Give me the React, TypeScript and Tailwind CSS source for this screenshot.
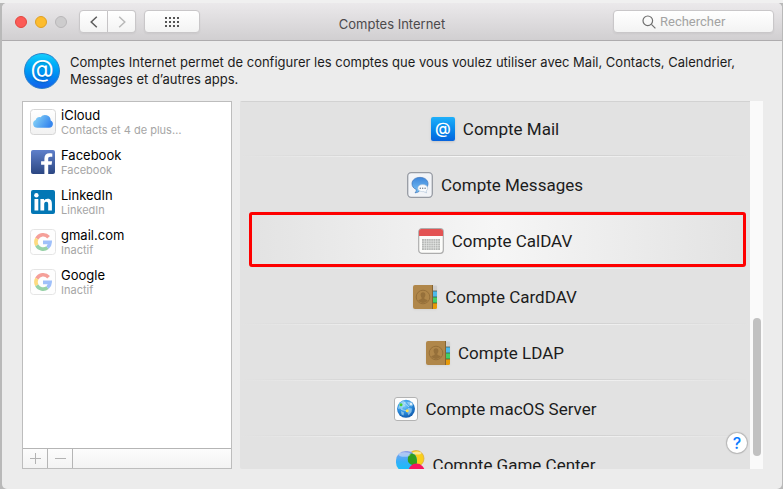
import type { ReactNode } from 'react';

function AtGlyph({ size }: { size: 'lg' | 'sm' }) {
  return size === 'lg' ? (
    <span
      aria-hidden="true"
      className="flex size-9 shrink-0 items-center justify-center rounded-full border border-[#2a7fc9] bg-linear-to-b from-[#14cdfc] to-[#1560ea] pb-1 text-2xl leading-none text-white text-shadow-sm"
    >
      @
    </span>
  ) : (
    <span
      aria-hidden="true"
      className="flex size-6 shrink-0 items-center justify-center rounded-xs bg-linear-to-b from-[#1fb0fa] to-[#0763dd] pb-0.5 font-['Inter','Liberation_Sans',sans-serif] text-base leading-none font-medium text-white shadow-sm"
    >
      @
    </span>
  );
}

function CloudIcon() {
  return (
    <svg viewBox="0 0 26 26" className="size-[26px]" aria-hidden="true">
      <defs>
        <linearGradient id="cloud" x1="0" y1="0" x2="1" y2="0.4">
          <stop offset="0" stopColor="#8fdcf8" />
          <stop offset="1" stopColor="#3787ee" />
        </linearGradient>
        <linearGradient id="tile" x1="0" y1="0" x2="0" y2="1">
          <stop offset="0" stopColor="#ffffff" />
          <stop offset="1" stopColor="#f1f1f1" />
        </linearGradient>
      </defs>
      <rect x="0.5" y="0.5" width="25" height="25" rx="3" fill="url(#tile)" stroke="#d6d6d6" />
      <path
        d="M7.2 18.8a4.100 4.100 0 0 1-1.500-7.900 3.600 3.600 0 0 1 4.900-2.700 5.700 5.700 0 0 1 10.100 3.200 3.900 3.900 0 0 1-1.500 7.400z"
        fill="url(#cloud)"
      />
    </svg>
  );
}

function FacebookIcon() {
  return (
    <svg viewBox="0 0 26 26" className="size-[26px]" aria-hidden="true">
      <defs>
        <linearGradient id="fb" x1="0" y1="0" x2="0" y2="1">
          <stop offset="0" stopColor="#5f80cb" />
          <stop offset="1" stopColor="#2b4682" />
        </linearGradient>
      </defs>
      <rect x="1" y="1" width="24" height="24" rx="2" fill="url(#fb)" />
      <path
        d="M14.400 25v-9.200h-3.300v-3.600h3.300V9.400c0-3.300 2-5.100 5-5.100 1.400 0 2.200.1 2.900.2v3.300h-2c-1.700 0-2.100.8-2.100 2v2.400h3.900l-.5 3.600h-3.400V25z"
        fill="#fff"
      />
    </svg>
  );
}

function LinkedInIcon() {
  return (
    <svg viewBox="0 0 26 26" className="size-[26px]" aria-hidden="true">
      <rect x="1" y="1" width="24" height="24" rx="2" fill="#0377b5" />
      <circle cx="6.400" cy="6.300" r="2.200" fill="#fff" />
      <path
        d="M4.500 10h3.800v11.500H4.500zM10.400 10H14v1.600c.6-1.100 1.900-1.900 3.600-1.900 3.600 0 4.300 2.400 4.300 5.500v6.300h-3.700v-5.700c0-1.400 0-3-1.900-3s-2.100 1.400-2.100 2.900v5.800h-3.800z"
        fill="#fff"
      />
    </svg>
  );
}

function GoogleIcon() {
  return (
    <svg viewBox="0 0 26 26" className="size-[26px]" aria-hidden="true">
      <rect x="0.5" y="0.5" width="25" height="25" rx="3" fill="#fefefe" stroke="#e5e5e5" />
      <g fill="none" strokeWidth="3.600">
        <path d="M18.600 8.200A7.200 7.200 0 0 0 6.800 9.600" stroke="#f5a099" />
        <path d="M6.800 9.600a7.200 7.200 0 0 0 0 6.800" stroke="#fddb80" />
        <path d="M6.800 16.400a7.200 7.200 0 0 0 10.700 2.200" stroke="#98d2a8" />
        <path d="M17.500 18.600a7.200 7.200 0 0 0 2.600-5.200H13" stroke="#9fc0fa" />
      </g>
    </svg>
  );
}

function MessagesIcon() {
  return (
    <svg viewBox="0 0 26 26" className="size-[26px]" aria-hidden="true">
      <defs>
        <linearGradient id="bubble" x1="0" y1="0" x2="0" y2="1">
          <stop offset="0" stopColor="#3d86db" />
          <stop offset="1" stopColor="#7cc4f6" />
        </linearGradient>
      </defs>
      <rect x="0.7" y="0.7" width="24.600" height="24.600" rx="3.500" fill="#f2f4f8" stroke="#979ba3" strokeWidth="1.300" />
      <path
        d="M13 5.400c4.700 0 8 2.600 8 6.300s-3.300 6.500-8 6.500c-.7 1.400-2.500 2.400-5 2.600 1-.9 1.400-2 1.300-3.300-2.700-1.100-4.300-3.200-4.300-5.800 0-3.700 3.300-6.300 8-6.300z"
        fill="url(#bubble)"
        stroke="#3770b8"
        strokeWidth="0.700"
      />
      <path
        d="M15.700 12.600c2.900 0 4.900 1.500 4.900 3.600 0 1.200-.6 2.200-1.600 2.800 0 .8.300 1.400 1 1.800-1.500 0-2.500-.5-3.100-1.200-3.500.3-6.100-1.100-6.100-3.400 0-2.100 2-3.600 4.900-3.600z"
        fill="#f9fbfd"
        stroke="#a9bfd6"
        strokeWidth="0.600"
      />
      <g fill="#6b7686">
        <circle cx="13.300" cy="16.200" r="0.700" />
        <circle cx="15.700" cy="16.200" r="0.700" />
        <circle cx="18.100" cy="16.200" r="0.700" />
      </g>
    </svg>
  );
}

function CalendarIcon() {
  return (
    <svg viewBox="0 0 26 26" className="size-[26px]" aria-hidden="true">
      <rect x="0.700" y="0.700" width="24.600" height="24.600" rx="3" fill="#fcfcfa" stroke="#adadad" strokeWidth="1.200" />
      <path d="M1 8V3.500A2.500 2.500 0 0 1 3.500 1h19A2.500 2.500 0 0 1 25 3.500V8z" fill="#e35353" />
      <rect x="4" y="11" width="18" height="11" fill="#b5b7b5" />
      <path
        d="M4 13.200h18M4 15.400h18M4 17.600h18M4 19.800h18M6.300 11v11M8.500 11v11M10.800 11v11M13 11v11M15.300 11v11M17.500 11v11M19.800 11v11"
        stroke="#e9ebe9"
        strokeWidth="0.600"
      />
    </svg>
  );
}

function AddressBookIcon() {
  return (
    <svg viewBox="0 0 24 24" className="size-6 drop-shadow-xs" aria-hidden="true">
      <rect x="18" y="0.500" width="6" height="6" rx="1" fill="#cfcfcf" />
      <path d="M19 6h5v6h-5z" fill="#4db9ea" />
      <path d="M19 12h5v6h-5z" fill="#43cf64" />
      <path d="M19 18h5v4.500a1.500 1.500 0 0 1-1.500 1.500H19z" fill="#e79a09" />
      <path d="M20 6h4M20 12h4M20 18h4" stroke="#3d4a3a" strokeWidth="0.700" />
      <path d="M2 0h18v24H2a2 2 0 0 1-2-2V2a2 2 0 0 1 2-2z" fill="#b0874a" />
      <path d="M19.500 0v24" stroke="#856432" />
      <circle cx="10" cy="12" r="6.800" fill="none" stroke="#96703a" />
      <path
        d="M10 7.200c1.700 0 2.500 1.200 2.400 2.700-.1 1.200-.6 1.900-1 2.500v1.300c.9.800 2.400.9 3.500 1.900A6.300 6.300 0 0 1 10 18a6.300 6.300 0 0 1-4.900-2.400c1.100-1 2.600-1.100 3.500-1.900v-1.300c-.4-.6-.9-1.300-1-2.500-.1-1.500.7-2.700 2.400-2.700z"
        fill="#96703a"
      />
    </svg>
  );
}

function ServerIcon() {
  return (
    <svg viewBox="0 0 24 24" className="size-6" aria-hidden="true">
      <defs>
        <radialGradient id="globe" cx="0.4" cy="0.3" r="0.8">
          <stop offset="0" stopColor="#7fd0fb" />
          <stop offset="0.5" stopColor="#2b8fe0" />
          <stop offset="1" stopColor="#0b4c9e" />
        </radialGradient>
      </defs>
      <rect x="0.500" y="0.500" width="23" height="23" rx="2.500" fill="#fdfdfd" stroke="#b3b3b3" />
      <circle cx="12" cy="11.800" r="9" fill="url(#globe)" />
      <path
        d="M5.500 6.500 9 4l3 1.500-1.500 2 1 1.500-2.500 1-1 3-2-1.500-2 .5zM13 5l4-.5 2.500 3-1.500 2-3-1zM14 11l4 .5-.5 3.500-3 3.500-1.500-4zM7 14l3 1.500-.5 3-2-1z"
        fill="#bfe3f3"
        opacity="0.600"
      />
      <path d="M10 5.500 15 10M7.500 12.500 13 14" stroke="#e9faff" strokeWidth="0.500" />
      <circle cx="7" cy="7.800" r="1.500" fill="#43d22c" />
      <circle cx="13.200" cy="13.800" r="1.500" fill="#ffe14d" />
      <circle cx="17" cy="7" r="1" fill="#fff" />
    </svg>
  );
}

function GameCenterIcon() {
  return (
    <svg viewBox="0 0 30 30" className="size-[30px] shrink-0" aria-hidden="true">
      <defs>
        <linearGradient id="gcblue" x1="0" y1="0" x2="0" y2="1">
          <stop offset="0" stopColor="#8f9fe8" />
          <stop offset="0.500" stopColor="#35aefa" />
          <stop offset="1" stopColor="#10c3f7" />
        </linearGradient>
      </defs>
      <circle cx="21" cy="8.500" r="8" fill="#f9cf1c" stroke="#d9a437" strokeWidth="0.700" />
      <rect x="1" y="1" width="21" height="21" rx="9.500" fill="url(#gcblue)" />
      <path d="M14.500 4.200c1.800-1.200 4-.9 5.700.8 1.800 2.500 2.300 6.500 1.300 10-3.800.6-7.500-.6-8.500-3.500-.6-2.800 0-5.600 1.500-7.300z" fill="#2f9e1e" />
      <circle cx="21.500" cy="21.700" r="8.200" fill="#f5145e" />
      <circle cx="9" cy="25" r="5" fill="#8bd13f" />
      <ellipse cx="9.500" cy="4.500" rx="6" ry="2.300" fill="#fff" opacity="0.400" />
      <ellipse cx="22" cy="3" rx="4.500" ry="1.500" fill="#fff" opacity="0.500" />
    </svg>
  );
}

type Account = { name: string; detail: string; icon: ReactNode };

const accounts: Account[] = [
  { name: 'iCloud', detail: 'Contacts et 4 de plus…', icon: <CloudIcon /> },
  { name: 'Facebook', detail: 'Facebook', icon: <FacebookIcon /> },
  { name: 'LinkedIn', detail: 'LinkedIn', icon: <LinkedInIcon /> },
  { name: 'gmail.com', detail: 'Inactif', icon: <GoogleIcon /> },
  { name: 'Google', detail: 'Inactif', icon: <GoogleIcon /> },
];

type Provider = { label: string; icon: ReactNode; selected?: boolean };

const providers: Provider[] = [
  { label: 'Compte Mail', icon: <AtGlyph size="sm" /> },
  { label: 'Compte Messages', icon: <MessagesIcon /> },
  { label: 'Compte CalDAV', icon: <CalendarIcon />, selected: true },
  { label: 'Compte CardDAV', icon: <AddressBookIcon /> },
  { label: 'Compte LDAP', icon: <AddressBookIcon /> },
  { label: 'Compte macOS Server', icon: <ServerIcon /> },
  { label: 'Compte Game Center', icon: <GameCenterIcon /> },
];

const toolButton =
  'flex h-[23px] items-center justify-center border border-[#c9c7c9] bg-linear-to-b from-white to-[#f3f3f3] shadow-xs';

function TitleBar() {
  return (
    <header className="grid h-[38px] grid-cols-3 items-center rounded-t-[5px] border-b border-[#aeacae] bg-linear-to-b from-[#ebe9eb] to-[#d1cfd1]">
      <div className="flex items-center pl-[13px]">
        <div className="flex gap-2">
          <button aria-label="Fermer" className="size-3 rounded-full border border-[#e2463f] bg-[#fc5b57]" />
          <button aria-label="Réduire" className="size-3 rounded-full border border-[#dfa023] bg-[#fdbc2e]" />
          <button aria-label="Agrandir" className="size-3 rounded-full border border-[#b9b7b9] bg-[#cdcccd]" />
        </div>
        <div className="ml-3 flex">
          <button aria-label="Précédent" className={`${toolButton} w-[29px] rounded-l`}>
            <svg viewBox="0 0 8 12" className="h-3 w-2" fill="none" stroke="#5c5c5c" strokeWidth="1.500" aria-hidden="true">
              <path d="M6.800 0.700 1.200 6l5.600 5.300" />
            </svg>
          </button>
          <button aria-label="Suivant" className={`${toolButton} w-7 rounded-r border-l-0`}>
            <svg viewBox="0 0 8 12" className="h-3 w-2" fill="none" stroke="#b9b9b9" strokeWidth="1.500" aria-hidden="true">
              <path d="m1.200 0.700 5.600 5.300-5.600 5.300" />
            </svg>
          </button>
        </div>
        <button aria-label="Tout afficher" className={`${toolButton} ml-2 w-14 rounded`}>
          <svg viewBox="0 0 14 10" className="h-2.5 w-3.5" fill="#555" aria-hidden="true">
            {[0, 4, 8].map((y) =>
              [0, 4, 8, 12].map((x) => <rect key={`${x}-${y}`} x={x} y={y} width="2" height="2" />),
            )}
          </svg>
        </button>
      </div>
      <h1 className="pt-1 text-center text-[13px] leading-4 text-[#4c4a4c]">Comptes Internet</h1>
      <label className="mr-2 flex h-[23px] w-[161px] items-center gap-1 justify-self-end rounded border border-[#c9c7c9] bg-linear-to-b from-white to-[#f3f3f3] pl-7 shadow-xs">
        <svg viewBox="0 0 14 14" className="size-3.5 shrink-0" fill="none" stroke="#6e6e6e" strokeWidth="1.200" aria-hidden="true">
          <circle cx="5.800" cy="5.800" r="4.800" />
          <path d="m9.400 9.400 4 4" />
        </svg>
        <input
          type="search"
          aria-label="Rechercher"
          placeholder="Rechercher"
          className="w-full min-w-0 bg-transparent font-['Roboto','Liberation_Sans',sans-serif] text-[13px] leading-4 outline-none placeholder:text-[#a3a3a3]"
        />
      </label>
    </header>
  );
}

function AccountList() {
  return (
    <section className="flex w-[210px] shrink-0 flex-col border border-[#bdbdbd] bg-white">
      <ul className="grow">
        {accounts.map((a) => (
          <li key={a.name} className="flex h-10 items-center gap-[5px] pl-[7px]">
            <span className="shrink-0">{a.icon}</span>
            <span className="flex flex-col">
              <span className="text-[13px] leading-4 text-black">{a.name}</span>
              <span className="text-[11px] leading-3.5 text-[#a6a6a6]">{a.detail}</span>
            </span>
          </li>
        ))}
      </ul>
      <div className="flex h-5 shrink-0 border-t border-[#b5b5b5] bg-linear-to-b from-[#fcfcfc] to-[#f3f3f3]">
        <button aria-label="Ajouter" className="flex w-[25px] items-center justify-center border-r border-[#b5b5b5]">
          <svg viewBox="0 0 11 11" className="size-[11px]" stroke="#b3b3b3" aria-hidden="true">
            <path d="M5.500 0v11M0 5.500h11" />
          </svg>
        </button>
        <button aria-label="Supprimer" className="flex w-[25px] items-center justify-center border-r border-[#b5b5b5]">
          <svg viewBox="0 0 11 11" className="size-[11px]" stroke="#b3b3b3" aria-hidden="true">
            <path d="M0 5.500h11" />
          </svg>
        </button>
      </div>
    </section>
  );
}

function ProviderList() {
  return (
    <section className="relative flex h-[368px] min-w-0 grow overflow-hidden rounded-l-xs">
      <ul className="min-w-0 grow bg-[#e2e2e2] inset-shadow-[0_1px_0_#d2d2d2]">
        {providers.map((p) => (
          <li key={p.label} className="relative">
            <button
              className={`flex h-[54px] w-full items-center justify-center gap-2 pt-0.5 font-['Roboto','Liberation_Sans',sans-serif] text-[17px] leading-5 text-[#1c1c1c] ${
                p.selected ? 'bg-linear-to-r from-[#e2e2e2] via-[#f6f6f6] to-[#e2e2e2]' : ''
              }`}
            >
              {p.icon}
              {p.label}
            </button>
            <div className="h-px bg-linear-to-r from-[#e2e2e2] via-[#c8c8c8] to-[#e2e2e2]" />
            <div className="h-px bg-linear-to-r from-[#e2e2e2] via-[#fafafa] to-[#e2e2e2]" />
            {p.selected && (
              <div className="pointer-events-none absolute -top-px right-1 bottom-0.5 left-[9px] rounded-[3px] border-3 border-[#fe0000]" />
            )}
          </li>
        ))}
      </ul>
      <div className="flex w-[13px] shrink-0 flex-col items-center justify-end bg-[#fafafa] pb-[13px]">
        <div className="h-[138px] w-2 rounded-full bg-[#c1c1c1]" />
      </div>
      <button
        aria-label="Aide"
        className="absolute right-4 bottom-4 flex size-5 items-center justify-center rounded-full bg-white text-base leading-none font-medium text-[#0a7bff] shadow-[0_0_1px_1px_#b5b5b5]"
      >
        ?
      </button>
    </section>
  );
}

export default function App() {
  return (
    <div className="min-h-screen bg-[#b9b9b9] font-['Inter','Liberation_Sans',sans-serif]">
      <div className="border-t-3 border-[#f0f0f0]">
        <div className="mr-px ml-0.5 flex min-h-[486px] flex-col rounded-[5px] bg-[#ececec]">
          <TitleBar />
          <main className="flex grow flex-col pr-[19px] pl-5">
            <div className="flex h-[60px] items-center gap-2.5 pl-0.5">
              <AtGlyph size="lg" />
              <p className="text-[13px] leading-[17px] text-[#1c1c1c]">
                Comptes Internet permet de configurer les comptes que vous voulez utiliser avec Mail, Contacts, Calendrier,
                Messages et d’autres apps.
              </p>
            </div>
            <div className="flex gap-2">
              <AccountList />
              <ProviderList />
            </div>
          </main>
        </div>
      </div>
    </div>
  );
}
